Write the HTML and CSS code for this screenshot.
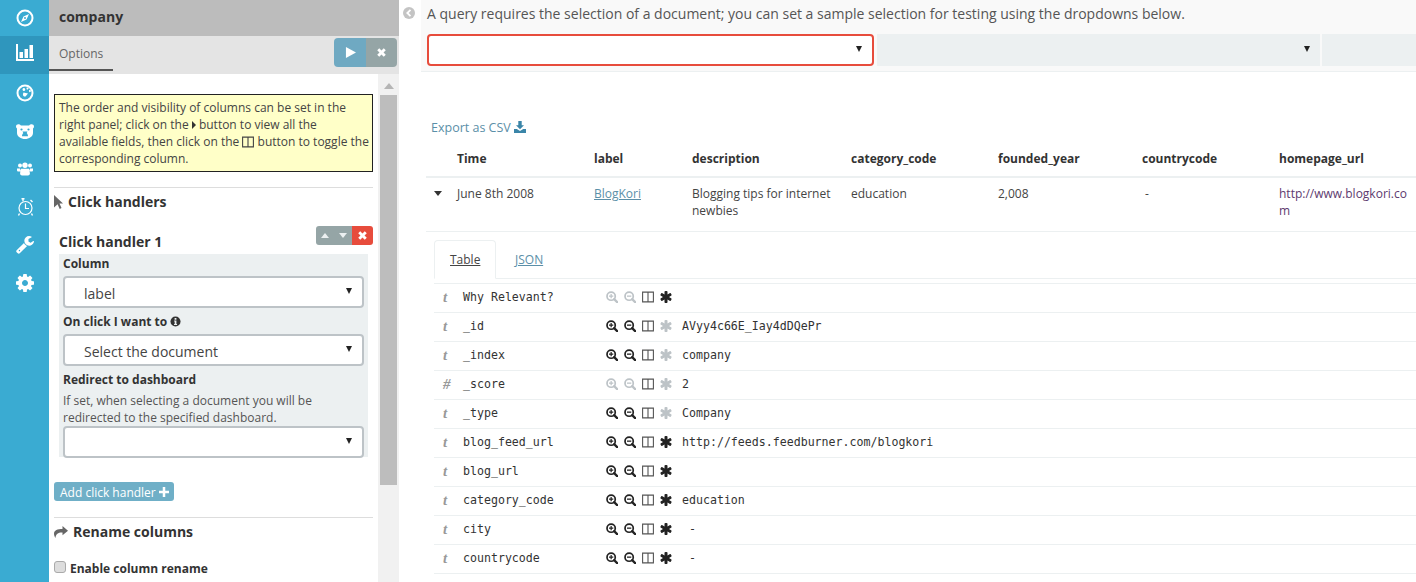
FILE: index.html
```html
<!DOCTYPE html>
<html lang="en">

<head>
    <meta charset="UTF-8">
    <title>Enhanced search results</title>
    <link rel="stylesheet" href="styles.css">
</head>

<body>
    <svg class="defs" xmlns="http://www.w3.org/2000/svg">
        <symbol id="i-cog" viewBox="128 128 1536 1536"><path d="M1152 896q0-106-75-181t-181-75-181 75-75 181 75 181 181 75 181-75 75-181zm512-109v222q0 12-8 23t-20 13l-185 28q-19 54-39 91 35 50 107 138 10 12 10 25t-9 23q-27 37-99 108t-94 71q-12 0-26-9l-138-108q-44 23-91 38-16 136-29 186-7 28-36 28h-222q-14 0-24.5-8.5t-11.5-21.5l-28-184q-49-16-90-37l-141 107q-10 9-25 9-14 0-25-11-126-114-165-168-7-10-7-23 0-12 8-23 15-21 51-66.5t54-70.5q-27-50-41-99l-183-27q-13-2-21-12.5t-8-23.5v-222q0-12 8-23t19-13l186-28q14-46 39-92-40-57-107-138-10-12-10-24 0-10 9-23 26-36 98.5-107.5t94.5-71.5q13 0 26 10l138 107q44-23 91-38 16-136 29-186 7-28 36-28h222q14 0 24.5 8.5t11.5 21.5l28 184q49 16 90 37l142-107q9-9 24-9 13 0 25 10 129 119 165 170 7 8 7 22 0 12-8 23-15 21-51 66.5t-54 70.5q26 50 41 98l183 28q13 2 21 12.5t8 23.5z"/></symbol>
        <symbol id="i-wrench" viewBox="64 128 1664 1664"><path d="M448 1472q0-26-19-45t-45-19-45 19-19 45 19 45 45 19 45-19 19-45zm644-420l-682 682q-37 37-90 37-52 0-91-37l-106-108q-38-36-38-90 0-53 38-91l681-681q39 98 114.5 173.5t173.5 114.5zm634-435q0 39-23 106-47 134-164.5 217.5t-258.5 83.5q-185 0-316.5-131.5t-131.5-316.5 131.5-316.5 316.5-131.5q58 0 121.5 16.5t107.5 46.5q16 11 16 28t-16 28l-293 169v224l193 107q5-3 79-48.5t135.5-81 70.5-35.5q15 0 23.5 10t8.5 25z"/></symbol>
        <symbol id="i-star" viewBox="128 128 1536 1536"><path d="M1546 1050q46 26 59.5 77.5t-12.5 97.5l-64 110q-26 46-77.5 59.5t-97.5-12.5l-266-153v307q0 52-38 90t-90 38h-128q-52 0-90-38t-38-90v-307l-266 153q-46 26-97.5 12.5t-77.5-59.5l-64-110q-26-46-12.5-97.5t59.5-77.5l266-154-266-154q-46-26-59.5-77.5t12.5-97.5l64-110q26-46 77.5-59.5t97.5 12.5l266 153v-307q0-52 38-90t90-38h128q52 0 90 38t38 90v307l266-153q46-26 97.5-12.5t77.5 59.5l64 110q26 46 12.5 97.5t-59.5 77.5l-266 154z"/></symbol>
        <symbol id="i-plus" viewBox="0 0 12 12"><path d="M4.500 0h3v4.500H12v3H7.500V12h-3V7.500H0v-3h4.500z"/></symbol>
        <symbol id="i-times" viewBox="0 0 12 12"><path d="M3 .3 6 3.300 9 .3 11.700 3l-3 3 3 3L9 11.700l-3-3-3 3L.3 9l3-3-3-3z"/></symbol>
        <symbol id="i-zoomin" viewBox="0 0 14 14"><circle cx="6" cy="6" r="4.800" fill="none" stroke="currentColor" stroke-width="2"/><path d="M9.500 9.500 13 13" stroke="currentColor" stroke-width="2.600" stroke-linecap="round"/><path d="M3.500 6h5M6 3.500v5" stroke="currentColor" stroke-width="1.400"/></symbol>
        <symbol id="i-zoomout" viewBox="0 0 14 14"><circle cx="6" cy="6" r="4.800" fill="none" stroke="currentColor" stroke-width="2"/><path d="M9.500 9.500 13 13" stroke="currentColor" stroke-width="2.600" stroke-linecap="round"/><path d="M3.500 6h5" stroke="currentColor" stroke-width="1.500"/></symbol>
        <symbol id="i-cols" viewBox="0 0 12 12"><path d="M.6 1.100h10.800v9.800H.6zM6 1.100v9.800" fill="none" stroke="currentColor" stroke-width="1.100"/></symbol>
    </svg>

    <div class="app">
        <nav class="sidebar">
            <a class="nav-item nav-first">
                <svg class="nav-icon" viewBox="0 0 18 18"><circle cx="9" cy="9" r="7.500" fill="none" stroke="#fff" stroke-width="2"/><path d="M13 5 10.500 10.500 5 13 7.500 7.500z" fill="#fff"/><circle cx="9" cy="9" r="1" fill="#3aabd2"/></svg>
            </a>
            <a class="nav-item nav-active">
                <svg class="nav-icon" viewBox="0 0 18 18"><path d="M0 0h2v15h16v2H0z" fill="#fff"/><path d="M3.500 8h3.500v6H3.500zM8.500 5H12v9H8.500zM13.500 1H17v13h-3.500z" fill="#fff"/></svg>
            </a>
            <a class="nav-item">
                <svg class="nav-icon" viewBox="0 0 18 18"><circle cx="9" cy="9" r="7.500" fill="none" stroke="#fff" stroke-width="2"/><path d="M6.500 5.500a1.400 1.400 0 1 1 0 .01zM10.500 4.500a1 1 0 1 1 0 .01zM13 7a1 1 0 1 1 0 .01zM7.500 8.500l4.500 1-2.500 3a2 2 0 0 1-2.500-2.500z" fill="#fff"/></svg>
            </a>
            <a class="nav-item">
                <svg class="nav-icon nav-bear" viewBox="0 0 18 15"><path d="M0 2.500C0 .8 1.500 0 3 .3 4 .6 4.500 1.200 5 1.500h8c.5-.3 1-.9 2-1.200 1.500-.3 3 .5 3 2.200 0 .9-.4 1.500-1 2V9c0 3.500-4 6-8 6s-8-2.500-8-6V4.500c-.6-.5-1-1.100-1-2z" fill="#fff"/><circle cx="5.500" cy="5.500" r="1.100" fill="#3aabd2"/><circle cx="12.500" cy="5.500" r="1.100" fill="#3aabd2"/><path d="M6.500 7.500h5L10.700 9c.8.800 1.300 2 1.300 3.300H6c0-1.300.5-2.500 1.300-3.300z" fill="#3aabd2"/></svg>
            </a>
            <a class="nav-item">
                <svg class="nav-icon nav-users" viewBox="0 0 16 14"><circle cx="3" cy="3.500" r="2" fill="#fff"/><circle cx="13" cy="3.500" r="2" fill="#fff"/><circle cx="8" cy="3.200" r="2.700" fill="#fff"/><path d="M0 6.500h3l.8 3H1.500C.5 9.500 0 9 0 8.200zM16 6.500h-3l-.8 3h2.300c1 0 1.500-.5 1.500-1.300zM4 6.700h8l.9 4.300c.2 1.400-.6 2.500-2 2.500H5.100c-1.400 0-2.200-1.100-2-2.500z" fill="#fff"/></svg>
            </a>
            <a class="nav-item">
                <svg class="nav-icon" viewBox="0 0 18 18"><circle cx="9.500" cy="10" r="6.500" fill="none" stroke="#fff" stroke-width="1.200"/><path d="M9.500 5.500V10.500H13" fill="none" stroke="#fff" stroke-width="1.200"/><path d="M5.500 .8h3M7 .8v2.500M3.500 15.500 2.500 17.500M15.500 15.500 16.500 17.500M14.500 2 16.500 4" stroke="#fff" stroke-width="1.400" fill="none"/></svg>
            </a>
            <a class="nav-item">
                <svg class="nav-icon nav-fill"><use href="#i-wrench"/></svg>
            </a>
            <a class="nav-item">
                <svg class="nav-icon nav-fill"><use href="#i-cog"/></svg>
            </a>
        </nav>

        <aside class="panel">
            <div class="panel-title">company</div>
            <div class="panel-tabs">
                <span class="panel-tab">Options</span>
                <div class="run-btns">
                    <button class="run-btn run-play"><svg class="ic-play" viewBox="0 0 12 12"><path d="M1 0l11 6-11 6z"/></svg></button>
                    <button class="run-btn run-stop"><svg class="ic-xs"><use href="#i-times"/></svg></button>
                </div>
            </div>
            <div class="panel-body">
                <div class="options">
                    <div class="hint">
                        The order and visibility of columns can be set in the<br>
                        right panel; click on the
                        <svg class="ic-caret" viewBox="0 0 4 8"><path d="M0 0l4 4-4 4z"/></svg>
                        button to view all the<br>
                        available fields, then click on the
                        <svg class="ic-hint-cols"><use href="#i-cols"/></svg>
                        button to toggle the<br>
                        corresponding column.
                    </div>

                    <hr class="rule rule-first">
                    <h3 class="section-title">
                        <svg class="ic-pointer" viewBox="0 0 9 14"><path d="M0 0l9 8.500H5.500L7.500 13 5.700 14 3.600 9.300 0 12.500z"/></svg>
                        Click handlers
                    </h3>

                    <div class="handler-head">
                        <h3 class="handler-title">Click handler 1</h3>
                        <div class="handler-btns">
                            <span class="mini-btn"><svg class="ic-tri" viewBox="0 0 8 5"><path d="M0 5l4-5 4 5z"/></svg></span>
                            <span class="mini-btn"><svg class="ic-tri" viewBox="0 0 8 5"><path d="M0 0l4 5 4-5z"/></svg></span>
                            <span class="mini-btn mini-del"><svg class="ic-xs"><use href="#i-times"/></svg></span>
                        </div>
                    </div>

                    <div class="handler-form">
                        <label class="field-label">Column</label>
                        <div class="select"><span>label</span><i class="select-arrow"></i></div>
                        <label class="field-label field-gap">On click I want to
                            <svg class="ic-info" viewBox="0 0 12 12"><circle cx="6" cy="6" r="5.500"/><path d="M5 2.300h2v1.700H5zM4.500 5h2.500v3.800h.7v1H4.400v-1h.7V6h-.6z" fill="#ecf0f1"/></svg>
                        </label>
                        <div class="select"><span>Select the document</span><i class="select-arrow"></i></div>
                        <label class="field-label field-gap">Redirect to dashboard</label>
                        <p class="field-help">If set, when selecting a document you will be redirected to the specified dashboard.</p>
                        <div class="select"><span></span><i class="select-arrow"></i></div>
                    </div>

                    <button class="add-btn">Add click handler <svg class="ic-plus"><use href="#i-plus"/></svg></button>

                    <hr class="rule rule-second">
                    <h3 class="section-title">
                        <svg class="ic-share" viewBox="0 0 14 12"><path d="M8.500 0 14 4.700 8.500 9.300V6.500C4.500 6.300 1.800 7.500 1.500 12 .5 10.500 0 9 0 7.700 0 4 3.500 3 8.500 2.900z"/></svg>
                        Rename columns
                    </h3>
                    <label class="check-row"><input type="checkbox" class="check"> Enable column rename</label>
                </div>
                <div class="scrollbar">
                    <i class="scroll-up"></i>
                    <div class="scroll-thumb"></div>
                </div>
            </div>
        </aside>

        <main class="main">
            <div class="collapse-col">
                <svg class="ic-back" viewBox="0 0 12 12"><circle cx="6" cy="6" r="6"/><path d="M7.500 2.800 4.300 6l3.200 3.200" fill="none" stroke="#fff" stroke-width="1.800"/></svg>
            </div>
            <div class="content">
                <div class="sample-bar">
                    <p class="sample-text">A query requires the selection of a document; you can set a sample selection for testing using the dropdowns below.</p>
                    <div class="sample-selects">
                        <div class="sample-select sample-error"><i class="select-arrow"></i></div>
                        <div class="sample-select sample-off"><i class="select-arrow"></i></div>
                        <div class="sample-select sample-rest"></div>
                    </div>
                </div>

                <a class="export">Export as CSV
                    <svg class="ic-export" viewBox="0 0 12 12"><path d="M4.300 0h3.400v4.200h2.300L6 8.300 2 4.200h2.300zM0 8h2.800L6 10 9.200 8H12v4H0z"/></svg>
                </a>

                <table class="results">
                    <colgroup>
                        <col class="c-toggle"><col class="c-time"><col class="c-label"><col class="c-desc"><col class="c-cat"><col class="c-year"><col class="c-country"><col class="c-url">
                    </colgroup>
                    <thead>
                        <tr>
                            <th></th>
                            <th>Time</th>
                            <th>label</th>
                            <th>description</th>
                            <th>category_code</th>
                            <th>founded_year</th>
                            <th>countrycode</th>
                            <th>homepage_url</th>
                        </tr>
                    </thead>
                    <tbody>
                        <tr>
                            <td><svg class="ic-open" viewBox="0 0 8 5"><path d="M0 0h8L4 5z"/></svg></td>
                            <td>June 8th 2008</td>
                            <td><a class="link">BlogKori</a></td>
                            <td>Blogging tips for internet newbies</td>
                            <td>education</td>
                            <td>2,008</td>
                            <td>&nbsp;-</td>
                            <td class="url-cell">http://www.blogkori.com</td>
                        </tr>
                    </tbody>
                </table>

                <div class="doc">
                    <div class="doc-tabs">
                        <a class="doc-tab doc-tab-on">Table</a>
                        <a class="doc-tab">JSON</a>
                    </div>
                    <div class="doc-rows">
                        <div class="doc-row">
                            <span class="f-type">t</span><span class="f-name">Why Relevant?</span>
                            <span class="f-btns"><svg class="off"><use href="#i-zoomin"/></svg><svg class="off"><use href="#i-zoomout"/></svg><svg class="cols"><use href="#i-cols"/></svg><svg class="star"><use href="#i-star"/></svg></span>
                            <span class="f-value"></span>
                        </div>
                        <div class="doc-row">
                            <span class="f-type">t</span><span class="f-name">_id</span>
                            <span class="f-btns"><svg><use href="#i-zoomin"/></svg><svg><use href="#i-zoomout"/></svg><svg class="cols"><use href="#i-cols"/></svg><svg class="star off"><use href="#i-star"/></svg></span>
                            <span class="f-value">AVyy4c66E_Iay4dDQePr</span>
                        </div>
                        <div class="doc-row">
                            <span class="f-type">t</span><span class="f-name">_index</span>
                            <span class="f-btns"><svg><use href="#i-zoomin"/></svg><svg><use href="#i-zoomout"/></svg><svg class="cols"><use href="#i-cols"/></svg><svg class="star off"><use href="#i-star"/></svg></span>
                            <span class="f-value">company</span>
                        </div>
                        <div class="doc-row">
                            <span class="f-type">#</span><span class="f-name">_score</span>
                            <span class="f-btns"><svg class="off"><use href="#i-zoomin"/></svg><svg class="off"><use href="#i-zoomout"/></svg><svg class="cols"><use href="#i-cols"/></svg><svg class="star off"><use href="#i-star"/></svg></span>
                            <span class="f-value">2</span>
                        </div>
                        <div class="doc-row">
                            <span class="f-type">t</span><span class="f-name">_type</span>
                            <span class="f-btns"><svg><use href="#i-zoomin"/></svg><svg><use href="#i-zoomout"/></svg><svg class="cols"><use href="#i-cols"/></svg><svg class="star off"><use href="#i-star"/></svg></span>
                            <span class="f-value">Company</span>
                        </div>
                        <div class="doc-row">
                            <span class="f-type">t</span><span class="f-name">blog_feed_url</span>
                            <span class="f-btns"><svg><use href="#i-zoomin"/></svg><svg><use href="#i-zoomout"/></svg><svg class="cols"><use href="#i-cols"/></svg><svg class="star"><use href="#i-star"/></svg></span>
                            <span class="f-value">http://feeds.feedburner.com/blogkori</span>
                        </div>
                        <div class="doc-row">
                            <span class="f-type">t</span><span class="f-name">blog_url</span>
                            <span class="f-btns"><svg><use href="#i-zoomin"/></svg><svg><use href="#i-zoomout"/></svg><svg class="cols"><use href="#i-cols"/></svg><svg class="star"><use href="#i-star"/></svg></span>
                            <span class="f-value"></span>
                        </div>
                        <div class="doc-row">
                            <span class="f-type">t</span><span class="f-name">category_code</span>
                            <span class="f-btns"><svg><use href="#i-zoomin"/></svg><svg><use href="#i-zoomout"/></svg><svg class="cols"><use href="#i-cols"/></svg><svg class="star"><use href="#i-star"/></svg></span>
                            <span class="f-value">education</span>
                        </div>
                        <div class="doc-row">
                            <span class="f-type">t</span><span class="f-name">city</span>
                            <span class="f-btns"><svg><use href="#i-zoomin"/></svg><svg><use href="#i-zoomout"/></svg><svg class="cols"><use href="#i-cols"/></svg><svg class="star"><use href="#i-star"/></svg></span>
                            <span class="f-value">&nbsp;-</span>
                        </div>
                        <div class="doc-row doc-row-last">
                            <span class="f-type">t</span><span class="f-name">countrycode</span>
                            <span class="f-btns"><svg><use href="#i-zoomin"/></svg><svg><use href="#i-zoomout"/></svg><svg class="cols"><use href="#i-cols"/></svg><svg class="star"><use href="#i-star"/></svg></span>
                            <span class="f-value">&nbsp;-</span>
                        </div>
                    </div>
                </div>
            </div>
        </main>
    </div>
</body>

</html>
```

FILE: styles.css
```css
* {
    margin: 0;
    padding: 0;
    box-sizing: border-box;
}

html,
body {
    height: 100%;
    overflow: hidden;
}

body {
    font-family: "Open Sans", "Liberation Sans", sans-serif;
    font-size: 12px;
    line-height: 17px;
    color: #444;
    background-color: #fff;
}

.defs {
    display: none;
}

.app {
    display: flex;
    height: 582px;
}

/* left icon bar */
.sidebar {
    width: 49px;
    flex-shrink: 0;
    background-color: #3aabd2;
}

.nav-item {
    display: flex;
    align-items: center;
    justify-content: center;
    height: 38px;
}

.nav-first {
    height: 36px;
}

.nav-active {
    background-color: #2f96bd;
    padding-bottom: 4px;
}

.nav-icon {
    width: 18px;
    height: 18px;
}

.nav-bear {
    height: 15px;
}

.nav-users {
    width: 16px;
    height: 14px;
}

.nav-fill {
    fill: #fff;
}

/* options panel */
.panel {
    width: 350px;
    flex-shrink: 0;
    display: flex;
    flex-direction: column;
    height: 100%;
}

.panel-title {
    height: 36px;
    padding: 8px 10px;
    background-color: #bcbcbc;
    font-size: 14px;
    line-height: 18px;
    font-weight: 700;
    color: #333;
}

.panel-tabs {
    height: 38px;
    display: flex;
    justify-content: space-between;
    background-color: #e4e4e4;
    padding: 2px 2px 0 0;
}

.panel-tab {
    width: 64px;
    height: 33px;
    padding: 7px 0 0 10px;
    border-bottom: 2px solid #555;
    color: #666;
}

.run-btns {
    display: flex;
    height: 29px;
}

.run-btn {
    width: 32px;
    border: 0;
    display: flex;
    align-items: center;
    justify-content: center;
    fill: #fff;
}

.run-play {
    background-color: #6fa9c2;
    border-radius: 4px 0 0 4px;
}

.run-stop {
    width: 31px;
    background-color: #95a5a6;
    border-radius: 0 4px 4px 0;
}

.ic-play {
    width: 11px;
    height: 11px;
}

.ic-xs {
    width: 9px;
    height: 9px;
    fill: #fff;
}

.panel-body {
    flex: 1;
    display: flex;
    min-height: 0;
}

.options {
    width: 329px;
    padding: 20px 5px 0;
    overflow: hidden;
}

.hint {
    height: 78px;
    padding: 4px 0 4px 4px;
    background-color: #ffffc8;
    border: 1px solid #222;
    white-space: nowrap;
}

.ic-caret {
    width: 4px;
    height: 8px;
    fill: #333;
}

.ic-hint-cols {
    width: 12px;
    height: 12px;
    vertical-align: -2px;
}

.rule {
    border: 0;
    border-top: 1px solid #ddd;
}

.rule-first {
    margin-top: 15px;
}

.rule-second {
    margin-top: 16px;
}

.section-title {
    display: flex;
    align-items: center;
    gap: 5px;
    height: 27px;
    font-size: 14px;
    font-weight: 700;
    color: #333;
}

.ic-pointer {
    width: 9px;
    height: 14px;
    fill: #666;
}

.ic-share {
    width: 14px;
    height: 12px;
    fill: #666;
}

.handler-head {
    display: flex;
    justify-content: space-between;
    align-items: flex-end;
    height: 39px;
    padding: 8px 0 2px 5px;
}

.handler-title {
    font-size: 14px;
    line-height: 20px;
    font-weight: 700;
    color: #333;
}

.handler-btns {
    display: flex;
    align-self: flex-start;
    margin-top: 3px;
}

.mini-btn {
    width: 18px;
    height: 19px;
    display: flex;
    align-items: center;
    justify-content: center;
    background-color: #95a5a6;
}

.mini-btn:first-child {
    border-radius: 3px 0 0 3px;
}

.mini-del {
    width: 21px;
    background-color: #e74c3c;
    border-radius: 0 3px 3px 0;
}

.ic-tri {
    width: 8px;
    height: 5px;
    fill: #ecf0f1;
}

.handler-form {
    margin-left: 5px;
    width: 309px;
    height: 203px;
    padding: 0 4px;
    background-color: #ecf0f1;
}

.field-label {
    display: block;
    height: 22px;
    padding-top: 1px;
    font-weight: 700;
    color: #333;
}

.field-gap {
    padding-top: 5px;
    height: 26px;
}

.field-help {
    height: 34px;
    color: #555;
}

.ic-info {
    width: 11px;
    height: 11px;
    fill: #333;
    vertical-align: -1px;
}

.select {
    display: flex;
    align-items: center;
    justify-content: space-between;
    height: 32px;
    padding: 0 10px 0 19px;
    background-color: #fff;
    border: 2px solid #bdc3c7;
    border-radius: 4px;
    font-size: 14px;
    color: #444;
}

.select span {
    padding-top: 3px;
}

.select-arrow {
    width: 0;
    height: 0;
    margin-bottom: 2px;
    border-left: 3px solid transparent;
    border-right: 3px solid transparent;
    border-top: 6px solid #222;
}

.add-btn {
    display: flex;
    align-items: center;
    gap: 3px;
    height: 19px;
    width: 120px;
    margin-top: 25px;
    padding: 1px 0 0 6px;
    border: 0;
    border-radius: 3px;
    background-color: #6fafc7;
    color: #fff;
    font-family: inherit;
    font-size: 12px;
}

.ic-plus {
    width: 10px;
    height: 10px;
    fill: #fff;
}

.check-row {
    display: flex;
    align-items: center;
    gap: 4px;
    margin-top: 15px;
    font-weight: 700;
    color: #333;
}

.check {
    appearance: none;
    width: 12px;
    height: 12px;
    margin-top: -3px;
    background-color: #ddd;
    border: 1px solid #aaa;
    border-radius: 3px;
}

.scrollbar {
    width: 21px;
    background-color: #f1f1f1;
    padding: 0 2px;
}

.scroll-up {
    display: block;
    width: 0;
    height: 0;
    margin: 9px auto 6px;
    border-left: 5px solid transparent;
    border-right: 5px solid transparent;
    border-bottom: 6px solid #b5b5b5;
}

.scroll-thumb {
    height: 390px;
    background-color: #bdbdbd;
}

/* right side */
.main {
    flex: 1;
    min-width: 0;
    display: flex;
}

.collapse-col {
    width: 22px;
    flex-shrink: 0;
    padding: 7px 0 0 4px;
}

.ic-back {
    display: block;
    width: 12px;
    height: 12px;
    fill: #c4c4c4;
}

.content {
    flex: 1;
    min-width: 0;
}

.sample-bar {
    height: 72px;
    padding: 4px 0 0 6px;
    background-color: #f9f9f9;
    border-bottom: 1px solid #ecf0f1;
}

.sample-text {
    height: 30px;
    font-size: 14px;
    line-height: 19px;
    color: #555;
}

.sample-selects {
    display: flex;
    gap: 2px;
}

.sample-select {
    display: flex;
    align-items: center;
    justify-content: flex-end;
    height: 32px;
    padding-right: 10px;
    border-radius: 4px;
}

.sample-error {
    width: 447px;
    margin-right: 1px;
    background-color: #fff;
    border: 2px solid #e74c3c;
}

.sample-off {
    width: 443px;
    background-color: #ecf0f1;
    border-radius: 0;
}

.sample-rest {
    flex: 1;
    background-color: #ecf0f1;
    border-radius: 0;
}

.export {
    display: block;
    margin: 47px 0 0 10px;
    height: 17px;
    font-size: 12.500px;
    color: #5b8fa8;
}

.ic-export {
    width: 12px;
    height: 12px;
    fill: #3a85a8;
    vertical-align: -1px;
}

.results {
    width: 990px;
    margin: 14px 0 0 5px;
    table-layout: fixed;
    border-collapse: collapse;
}

.c-toggle {
    width: 23px;
}

.c-time {
    width: 137px;
}

.c-label {
    width: 98px;
}

.c-desc {
    width: 159px;
}

.c-cat {
    width: 147px;
}

.c-year {
    width: 144px;
}

.c-country {
    width: 137px;
}

.c-url {
    width: 145px;
}

.results th {
    height: 26px;
    padding: 0 8px 9px;
    text-align: left;
    font-weight: 700;
    color: #333;
    border-bottom: 2px solid #ecf0f1;
}

.results td {
    height: 54px;
    padding: 7px 8px 12px;
    vertical-align: top;
    border-bottom: 1px solid #ecf0f1;
}

.results td:first-child {
    padding: 7px 0 0 8px;
}

.ic-open {
    display: block;
    width: 8px;
    height: 5px;
    margin-top: 6px;
    fill: #333;
}

.link {
    color: #5b8fa8;
    text-decoration: underline;
}

.url-cell {
    word-break: break-all;
    color: #5d3a6e;
}

.doc {
    margin: 8px 0 0 13px;
}

.doc-tabs {
    display: flex;
    height: 39px;
    border-bottom: 1px solid #ecf0f1;
}

.doc-tab {
    height: 39px;
    padding: 10px 15px 0;
    border: 1px solid transparent;
    text-decoration: underline;
    color: #5b8fa8;
}

.doc-tab-on {
    width: 62px;
    margin-right: 3px;
    color: #444;
    border-color: #ecf0f1 #ecf0f1 #fff;
    border-radius: 4px 4px 0 0;
}

.doc-rows {
    margin-top: 4px;
}

.doc-row {
    display: flex;
    align-items: center;
    height: 29px;
    padding-bottom: 2px;
    border-top: 1px solid #ecf0f1;
    font-family: "DejaVu Sans Mono", "Liberation Mono", monospace;
    font-size: 11.600px;
    color: #333;
}

.doc-row-last {
    height: 30px;
    border-bottom: 1px solid #ecf0f1;
}

.f-type {
    width: 29px;
    padding-left: 9px;
    font-family: "Liberation Serif", serif;
    font-size: 15px;
    font-style: italic;
    font-weight: 700;
    color: #999;
}

.f-name {
    width: 143px;
}

.f-btns {
    display: flex;
    gap: 6px;
    width: 76px;
    color: #222;
}

.f-btns svg {
    width: 12px;
    height: 12px;
}

.f-btns .off {
    color: #bdc3c7;
    fill: #bdc3c7;
}

.f-btns .cols {
    color: #555;
}

.f-btns .star {
    fill: #222;
}

.f-btns .star.off {
    fill: #bdc3c7;
}
```
